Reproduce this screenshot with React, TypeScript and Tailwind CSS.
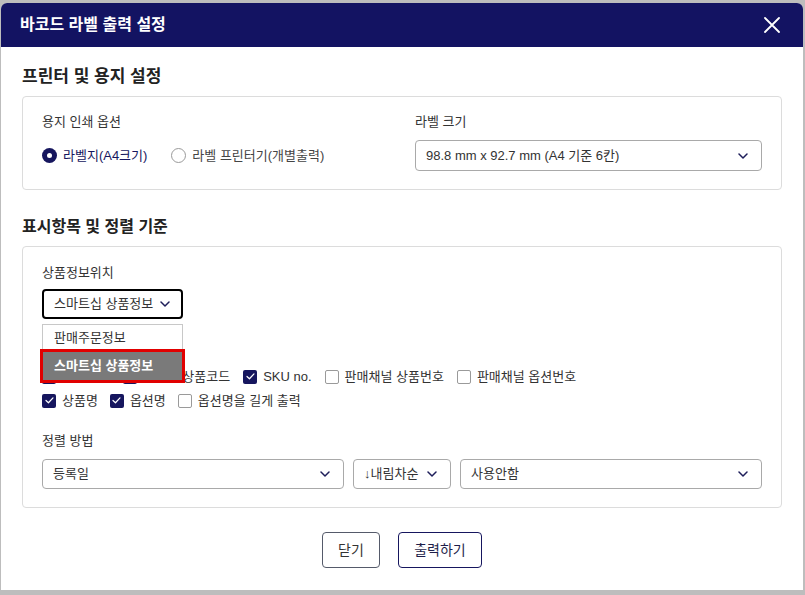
import React from 'react'

const font = { fontFamily: '"Liberation Sans", "Noto Sans CJK KR", sans-serif' }

function Chevron({ className = '' }: { className?: string }) {
  return (
    <svg viewBox="0 0 10 6" className={`w-[10px] h-[6px] ${className}`} fill="none">
      <path d="M1 1l4 4 4-4" stroke="#1e1e5a" strokeWidth="1.5" strokeLinecap="round" strokeLinejoin="round" />
    </svg>
  )
}

function Check({ checked, label }: { checked: boolean; label: string }) {
  return (
    <label className="flex items-center gap-[6px] text-[13px] text-[#333]">
      {checked ? (
        <span className="w-[14px] h-[14px] rounded-[2px] bg-[#16165e] flex items-center justify-center">
          <svg viewBox="0 0 10 8" className="w-[9px] h-[7px]" fill="none">
            <path d="M1 4l2.8 2.6L9 1" stroke="white" strokeWidth="1.4" strokeLinecap="round" strokeLinejoin="round" />
          </svg>
        </span>
      ) : (
        <span className="w-[14px] h-[14px] rounded-[2px] border border-[#9a9a9a] bg-white" />
      )}
      <span>{label}</span>
    </label>
  )
}

function Select({ text, className = '' }: { text: string; className?: string }) {
  return (
    <div className={`border border-[#a9a9a9] rounded-[4px] flex items-center justify-between pl-[10px] pr-[13px] text-[13px] text-[#333] ${className}`}>
      <span>{text}</span>
      <Chevron />
    </div>
  )
}

const row1 = [
  { label: '로케이션', checked: true },
  { label: '판매처 상품코드', checked: true },
  { label: 'SKU no.', checked: true },
  { label: '판매채널 상품번호', checked: false },
  { label: '판매채널 옵션번호', checked: false },
]

const row2 = [
  { label: '상품명', checked: true },
  { label: '옵션명', checked: true },
  { label: '옵션명을 길게 출력', checked: false },
]

export default function App() {
  return (
    <div style={font} className="w-[805px] h-[595px] bg-[#bdbdbd] pt-[3px] pl-[1px] overflow-hidden">
      <div className="w-[802px] h-[587px] bg-white rounded-t-[6px] flex flex-col">
        <div className="h-[44px] bg-[#131362] rounded-t-[6px] flex items-center justify-between pl-[19px] pr-[23px]">
          <h1 className="text-white text-[16px] font-bold">바코드 라벨 출력 설정</h1>
          <svg viewBox="0 0 16 16" className="w-[16px] h-[16px]" fill="none">
            <path d="M1 1l14 14M15 1L1 15" stroke="white" strokeWidth="1.8" strokeLinecap="round" />
          </svg>
        </div>

        <div className="px-[21px] flex flex-col">
          <h2 className="mt-[17px] text-[17px] font-bold text-[#222] leading-[26px]">프린터 및 용지 설정</h2>
          <div className="mt-[6px] border border-[#dcdcdc] rounded-[4px] px-[19px] pt-[17px] pb-[18px] grid grid-cols-2 gap-[26px]">
            <div>
              <div className="text-[13px] text-[#333] leading-[16px]">용지 인쇄 옵션</div>
              <div className="mt-[10px] flex items-center gap-[24px] h-[31px] text-[13px]">
                <label className="flex items-center gap-[6px] text-[#16165e]">
                  <span className="w-[15px] h-[15px] rounded-full bg-[#16165e] flex items-center justify-center">
                    <span className="w-[5px] h-[5px] rounded-full bg-white" />
                  </span>
                  라벨지(A4크기)
                </label>
                <label className="flex items-center gap-[6px] text-[#444]">
                  <span className="w-[15px] h-[15px] rounded-full border border-[#9a9a9a]" />
                  라벨 프린터기(개별출력)
                </label>
              </div>
            </div>
            <div>
              <div className="text-[13px] text-[#333] leading-[16px]">라벨 크기</div>
              <Select text="98.8 mm x 92.7 mm (A4 기준 6칸)" className="mt-[10px] h-[31px]" />
            </div>
          </div>

          <h2 className="mt-[24px] text-[16px] font-bold text-[#222] leading-[26px]">표시항목 및 정렬 기준</h2>
          <div className="mt-[6px] border border-[#dcdcdc] rounded-[4px] px-[19px] pt-[18px] pb-[18px] flex flex-col">
            <div className="text-[13px] text-[#333] leading-[16px]">상품정보위치</div>
            <div className="relative mt-[8px] w-[141px]">
              <div className="h-[30px] border-2 border-black rounded-[4px] flex items-center justify-between pl-[10px] pr-[11px] text-[13px] text-[#333]">
                <span>스마트십 상품정보</span>
                <Chevron />
              </div>
              <div className="absolute z-10 left-0 top-[35px] w-[141px] bg-white border border-[#c8c8c8]">
                <div className="h-[26px] flex items-center px-[11px] text-[13px] text-[#333]">판매주문정보</div>
                <div className="relative h-[29px] bg-[#7a7a7a] flex items-center px-[11px] text-[13px] font-bold text-white">
                  스마트십 상품정보
                  <span className="absolute -left-[3px] -right-[3px] -top-[2px] -bottom-[3px] border-[3px] border-[#e10000] pointer-events-none" />
                </div>
              </div>
            </div>

            <div className="mt-[49px] flex items-center gap-[13px] h-[17px]">
              {row1.map((c) => (
                <Check key={c.label} checked={c.checked} label={c.label} />
              ))}
            </div>
            <div className="mt-[7px] flex items-center gap-[12px] h-[17px]">
              {row2.map((c) => (
                <Check key={c.label} checked={c.checked} label={c.label} />
              ))}
            </div>

            <div className="mt-[24px] text-[13px] text-[#333] leading-[16px]">정렬 방법</div>
            <div className="mt-[10px] flex gap-[9px]">
              <Select text="등록일" className="w-[302px] h-[30px] shrink-0" />
              <Select text="↓내림차순" className="w-[98px] h-[30px] shrink-0 pl-[6px] pr-[8px]" />
              <Select text="사용안함" className="flex-1 h-[30px]" />
            </div>
          </div>

          <div className="mt-[24px] flex justify-center gap-[18px]">
            <button className="w-[58px] h-[36px] border border-[#555a6a] rounded-[4px] text-[14px] text-[#333]">닫기</button>
            <button className="w-[84px] h-[36px] border border-[#16165e] rounded-[4px] text-[14px] text-[#1e1e4a]">출력하기</button>
          </div>
        </div>
      </div>
    </div>
  )
}
